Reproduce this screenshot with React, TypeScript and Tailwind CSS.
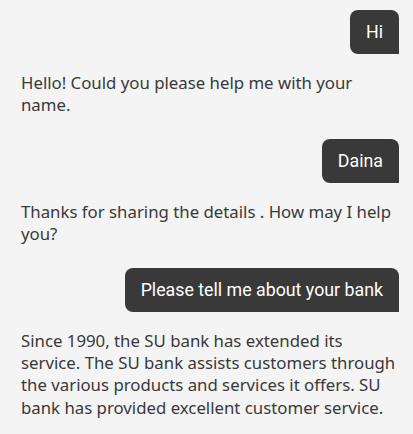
const messages = [
  { from: "user", text: "Hi" },
  { from: "bot", text: "Hello! Could you please help me with your name." },
  { from: "user", text: "Daina" },
  { from: "bot", text: "Thanks for sharing the details . How may I help you?" },
  { from: "user", text: "Please tell me about your bank" },
  {
    from: "bot",
    text: "Since 1990, the SU bank has extended its service. The SU bank assists customers through the various products and services it offers. SU bank has provided excellent customer service.",
  },
]

export default function App() {
  return (
    <div className="min-h-screen w-full bg-[#f4f4f4] pt-[10px] pl-[21px] pr-[14px]">
      <div className="flex flex-col">
        {messages.map((m, i) =>
          m.from === "user" ? (
            <div key={i} className="flex justify-end">
              <div className="rounded-t-[8px] rounded-bl-[8px] bg-[#393939] px-4 py-[10px] text-[17.8px] leading-6 text-white font-['Roboto',sans-serif]">
                {m.text}
              </div>
            </div>
          ) : (
            <p key={i} className="mt-[18px] mb-[22px] pr-[2px] text-[16.8px] leading-[22.4px] text-[#393939] font-['Noto_Sans',sans-serif]">
              {m.text}
            </p>
          )
        )}
      </div>
    </div>
  )
}
